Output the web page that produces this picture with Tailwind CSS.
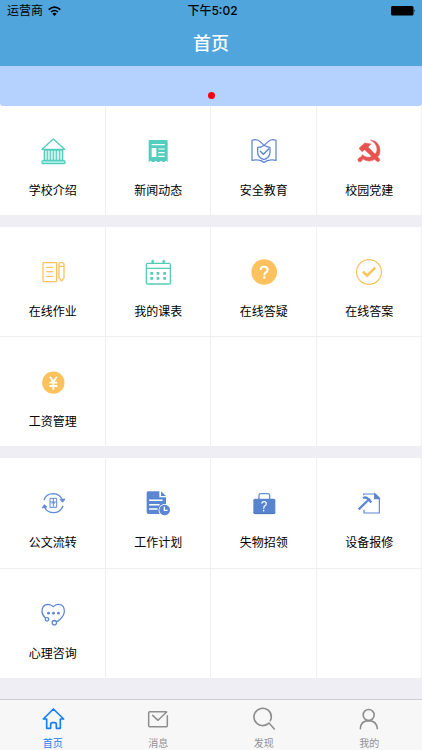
<!DOCTYPE html>
<html lang="zh-CN">
<head>
<meta charset="utf-8">
<meta name="viewport" content="width=device-width, initial-scale=1">
<title>首页</title>
<script src="https://cdn.jsdelivr.net/npm/@tailwindcss/browser@4"></script>
</head>
<body class="w-[422px] h-[750px] overflow-hidden bg-[#eeeef4] font-['Inter','Noto_Sans_CJK_SC',sans-serif] text-black">
<div class="flex flex-col h-[750px]">
  <header class="h-[66px] bg-[#50a5dc] flex flex-col shrink-0">
    <div class="h-[22px] grid grid-cols-3 items-center px-[7px] text-[12px] leading-[22px]">
      <div class="flex items-center gap-[5px]">
        <span>运营商</span>
        <svg class="w-[13px] h-[10px]" viewBox="0 0 39 30" fill="none" stroke="#000" stroke-width="4.6"><path d="M2 11Q19.500 -4 37 11M9 18Q19.500 9 30 18"/><path d="M13 23Q19.500 18 26 23L19.500 30Z" fill="#000" stroke="none"/></svg>
      </div>
      <div class="text-center text-[12px] font-medium whitespace-nowrap translate-x-[1.500px]">下午5:02</div>
      <svg class="w-[25px] h-[10px] justify-self-end translate-x-[1px]" viewBox="0 0 25 10"><rect width="22.500" height="9.500" rx="1.500"/><path d="M23.200 3.200q1.500 1.500 0 3z"/></svg>
    </div>
    <h1 class="text-center text-white text-[18px] font-medium leading-[44px]">首页</h1>
  </header>
  <div class="h-10 shrink-0 bg-white"><div class="h-10 bg-[#b5d2ff] rounded-b-[3px] flex justify-center items-end pb-[7px]"><span class="size-[7px] rounded-full bg-[#f5000c]"></span></div></div>

  <main class="flex flex-col gap-[11px] shrink-0 text-[12px] leading-4 [&_svg]:size-10 [&_svg]:mb-[11px] [&_section]:grid [&_section]:grid-cols-4 [&_section>div]:bg-white [&_section>div]:shadow-[inset_-1px_-1px_0_#efeff1] [&_section>div]:flex [&_section>div]:flex-col [&_section>div]:items-center [&_section>div]:pt-[26px]">
    <section class="auto-rows-[110px]">
      <div>
        <svg viewBox="98 21 120 120" fill="none" stroke="#53cdbd" stroke-width="4" stroke-linejoin="round"><path d="M125 73L159 42L193 73Z"/><path d="M132 75V106H187V75Z" fill="#c9f3ec"/><path d="M141 75V106M150 75V106M159 75V106M168 75V106M178 75V106" stroke-width="3"/><rect x="125" y="107" width="69" height="9" rx="3" fill="#a9ece2"/></svg>
        <span>学校介绍</span>
      </div>
      <div>
        <svg viewBox="415 21 120 120"><path fill="#53cdbd" d="M450 45H501Q504 45 504 48V111L499 107L494 111H489L484 107L479 111H473L468 107L463 111H458L453 107L447 111V48Q447 45 450 45Z"/><path d="M456 59H495M476 72H495M476 83H495M476 94H495" stroke="#fff" stroke-width="3.500"/><path d="M456 69H470V96H456Z" fill="#fff"/></svg>
        <span>新闻动态</span>
      </div>
      <div>
        <svg viewBox="98 21 120 120" fill="none" stroke="#6088cf" stroke-width="3.800" stroke-linejoin="round" stroke-linecap="round"><path d="M158 62L149 52Q137 40 122 46V106Q137 103 149 107L158 112L168 107Q180 103 194 106V46Q179 40 168 52Q160 61 149 66L139 67V82Q139 98 158 104Q176 98 176 82V67Q166 66 158 61"/><path d="M147 79L156 88L172 72" stroke-width="4.500"/></svg>
        <span>安全教育</span>
      </div>
      <div>
        <svg viewBox="415 21 120 120" fill="#e75450"><path d="M479 45Q508 48 508 78Q508 89 501 96L507 102Q509 108 503 110Q499 111 492 103Q475 114 457 102L452 109Q446 113 442 107Q440 102 445 99L452 95L455 89Q470 102 483 94L462 74L454 80L445 70L462 54L481 57L472 66L493 87Q499 82 499 74Q499 55 479 45Z" stroke="#e75450" stroke-width="1.500" stroke-linejoin="round"/></svg>
        <span>校园党建</span>
      </div>
    </section>

    <section class="auto-rows-[110px]">
      <div>
        <svg viewBox="98 24 120 120" fill="none" stroke="#fcc363" stroke-width="4" stroke-linejoin="round" stroke-linecap="round"><rect x="128" y="53" width="41" height="57" rx="2"/><path d="M139 67H158M139 80H158M139 94H158"/><path d="M176 58Q176 53 181 53H186Q191 53 191 58V98L184 108L176 98ZM176 64H191"/></svg>
        <span>在线作业</span>
      </div>
      <div>
        <svg viewBox="415 24 120 120" fill="none" stroke="#56cbb9" stroke-width="3.800"><rect x="440" y="55" width="72" height="62" rx="4"/><path d="M440 70H512"/><path d="M459 48V53M492 48V53" stroke-width="7" stroke-linecap="round"/><path d="M452 85H460M471 85H479M491 85H499M452 100H460M471 100H479M491 100H499" stroke-width="8"/></svg>
        <span>我的课表</span>
      </div>
      <div>
        <svg viewBox="98 24 120 120"><circle cx="158.500" cy="81" r="38.500" fill="#fdc25d"/><path d="M148 75Q148 65 158 65Q169 65 169 74Q169 79 163 83Q159 86 159 91" fill="none" stroke="#fff" stroke-width="6"/><circle cx="159" cy="97.500" r="3.600" fill="#fff"/></svg>
        <span>在线答疑</span>
      </div>
      <div>
        <svg viewBox="415 24 120 120" fill="none" stroke="#fdc25d"><circle cx="475" cy="81" r="37.300" stroke-width="3.600"/><path d="M457 80L469 92L494 68" stroke-width="7.500"/></svg>
        <span>在线答案</span>
      </div>
      <div>
        <svg viewBox="98 9 120 120"><circle cx="159" cy="68" r="33.500" fill="#fdc25d"/><path d="M149 50L159 66L169 50M159 65V89M147 68H171M147 78H171" fill="none" stroke="#fff" stroke-width="5.500"/></svg>
        <span>工资管理</span>
      </div>
      <div></div><div></div><div></div>
    </section>

    <section class="auto-rows-[110.500px]">
      <div>
        <svg viewBox="98 12 120 120" fill="none" stroke="#5e8bd5" stroke-width="4"><path d="M131 60Q137 41 159 41Q180 42 187 62M188 77Q181 98 160 98Q137 97 131 77"/><path d="M179 58L187 67L194 57ZM125 84L132 74L140 81Z" stroke-width="2.500" fill="#5e8bd5"/><path d="M149 55H169V82H149ZM159 55V80M149 66H169M155 71L159 66L163 71" stroke-width="3"/></svg>
        <span>公文流转</span>
      </div>
      <div>
        <svg viewBox="415 12 120 120"><path fill="#5b86d3" d="M446 34H479V52H499V73Q480 73 477 92Q477 98 481 102H446Q441 102 441 97V39Q441 34 446 34ZM484 34L499 48H484Z"/><path d="M450 61H487M450 74H478M450 87H472" stroke="#fff" stroke-width="4.500" stroke-linecap="round"/><circle cx="495" cy="90" r="18" fill="#fff"/><circle cx="495" cy="90" r="16" fill="#5b86d3"/><path d="M494 80V91H504" stroke="#fff" stroke-width="4" fill="none"/></svg>
        <span>工作计划</span>
      </div>
      <div>
        <svg viewBox="98 12 120 120"><path d="M143 57V46Q143 41 148 41H170Q175 41 175 46V57" fill="none" stroke="#668fcf" stroke-width="4"/><rect x="126" y="56" width="66" height="46" rx="5" fill="#5784cf"/><path d="M127 97Q127 101 132 101H186Q191 101 191 97" fill="none" stroke="#456eb2" stroke-width="2"/><path d="M151 71Q152 65 158 65Q165 65 165 71Q165 75 160 78Q157 81 157 86" fill="none" stroke="#fff" stroke-width="3.500"/><circle cx="157" cy="92" r="2.400" fill="#fff"/></svg>
        <span>失物招领</span>
      </div>
      <div>
        <svg viewBox="415 12 120 120" fill="none" stroke="#5b86d3" stroke-width="3.500"><path d="M459 46V42H494L506 54V99H460V89"/><path d="M492 42V56H506Z" fill="#5b86d3"/><path d="M444 88L470 63" stroke-width="7"/><path d="M457 54Q467 50 472 57L482 67" stroke-width="7"/><path d="M470 63L478 56" stroke-width="6"/></svg>
        <span>设备报修</span>
      </div>
      <div>
        <svg viewBox="98 13 120 120" fill="none" stroke="#5b86d3" stroke-width="3.800"><path d="M135 82Q125 73 125 62Q125 42 143 41Q152 41 159 48Q166 40 176 41Q192 43 192 61Q192 74 180 85Q173 92 168 94"/><circle cx="140" cy="86" r="5.300"/><circle cx="162" cy="96" r="6.500"/><g fill="#5b86d3" stroke="none"><circle cx="144.500" cy="67.500" r="4.200"/><circle cx="159.500" cy="67.500" r="4.200"/><circle cx="174.500" cy="67.500" r="4.200"/></g></svg>
        <span>心理咨询</span>
      </div>
      <div></div><div></div><div></div>
    </section>
  </main>

  <nav class="mt-auto h-[51px] shrink-0 border-t border-[#cbcbd4] bg-[#f7f7f8] grid grid-cols-4 text-[10px] leading-3 text-[#929292] [&>div]:flex [&>div]:flex-col [&>div]:items-center [&>div]:pt-[4px] [&_svg]:w-10 [&_svg]:h-[30px] [&_svg]:mb-[3px]">
    <div class="text-[#157efb]">
      <svg viewBox="98 342 120 90" fill="none" stroke="#157efb" stroke-width="5" stroke-linejoin="round" stroke-linecap="round"><path d="M129 387L159 357L190 387H180V415H168V404Q168 398 163 398H156Q151 398 151 404V415H139V387H129"/></svg>
      <span>首页</span>
    </div>
    <div>
      <svg viewBox="415 342 120 90" fill="none" stroke="#8e8e8e" stroke-width="4.500" stroke-linejoin="round" stroke-linecap="round"><path d="M500 365H450Q447 365 447 368V407Q447 410 450 410H500Q503 410 503 407V377M459 376L475 391L501 366"/></svg>
      <span>消息</span>
    </div>
    <div>
      <svg viewBox="98 102 120 90" fill="none" stroke="#8e8e8e" stroke-width="4.800" stroke-linecap="round"><path d="M177 152Q180 146 180 141A26 26 0 1 0 169 162L173 159L189 177"/></svg>
      <span>发现</span>
    </div>
    <div>
      <svg viewBox="415 102 120 90" fill="none" stroke="#8e8e8e" stroke-width="4.800" stroke-linecap="round"><circle cx="474" cy="135" r="16.500"/><path d="M449 176Q450 153 474 152Q498 153 500 176"/></svg>
      <span>我的</span>
    </div>
  </nav>
</div>
</body>
</html>
